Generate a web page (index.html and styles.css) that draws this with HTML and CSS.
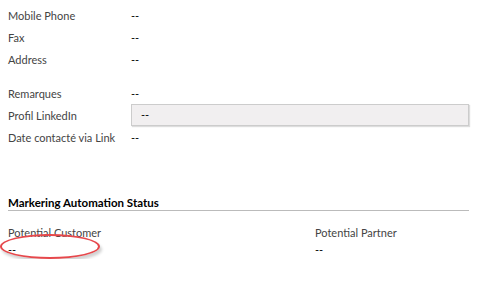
FILE: index.html
```html
<!DOCTYPE html>
<html lang="en">
<head>
<meta charset="UTF-8">
<title>Contact details</title>
<link rel="stylesheet" href="styles.css">
</head>
<body>
<div class="form">
  <div class="group">
    <div class="row"><span class="label">Mobile Phone</span><span class="value">--</span></div>
    <div class="row"><span class="label">Fax</span><span class="value">--</span></div>
    <div class="row"><span class="label">Address</span><span class="value">--</span></div>
  </div>
  <div class="group">
    <div class="row"><span class="label">Remarques</span><span class="value">--</span></div>
    <div class="row"><span class="label">Profil LinkedIn</span><span class="value box">--</span></div>
    <div class="row"><span class="label">Date contacté via Link</span><span class="value">--</span></div>
  </div>

  <div class="section">
    <h4 class="section-title">Markering Automation Status</h4>
    <div class="cols">
      <div class="field">
        <div class="label">Potential Customer</div>
        <div class="value">--</div>
        <div class="circled"></div>
      </div>
      <div class="field">
        <div class="label">Potential Partner</div>
        <div class="value">--</div>
      </div>
    </div>
  </div>
</div>
</body>
</html>
```
FILE: styles.css
```css
body { margin: 0; background: #fff; font-family: Lato, "Open Sans", sans-serif; font-size: 11px; color: #000; }
.form { padding: 4px 21px 0 8px; }
.group { margin-bottom: 12px; }
.row { display: flex; align-items: center; height: 22px; }
.label { width: 123px; color: #444; white-space: nowrap; }
.value { color: #000; }
.box { flex: 1; height: 20px; line-height: 20px; padding-left: 9px; background: #f1eff0; border: 1px solid #ccc; box-shadow: 1px 1px 1px #ddd; }
.section { margin-top: 48px; }
.section-title { margin: 0; padding-bottom: 1px; font-size: 11.5px; font-weight: bold; color: #000; border-bottom: 1px solid #bbb; }
.cols { display: grid; grid-template-columns: 307px 1fr; margin-top: 14px; }
.field { position: relative; }
.field .label { width: auto; line-height: 16px; }
.field .value { line-height: 18px; }
.circled { position: absolute; left: -8px; top: 9px; width: 96px; height: 21px; border: 2.5px solid #e6484c; border-radius: 50%; box-shadow: 2px 3px 3px rgba(0, 0, 0, 0.18); }
```
